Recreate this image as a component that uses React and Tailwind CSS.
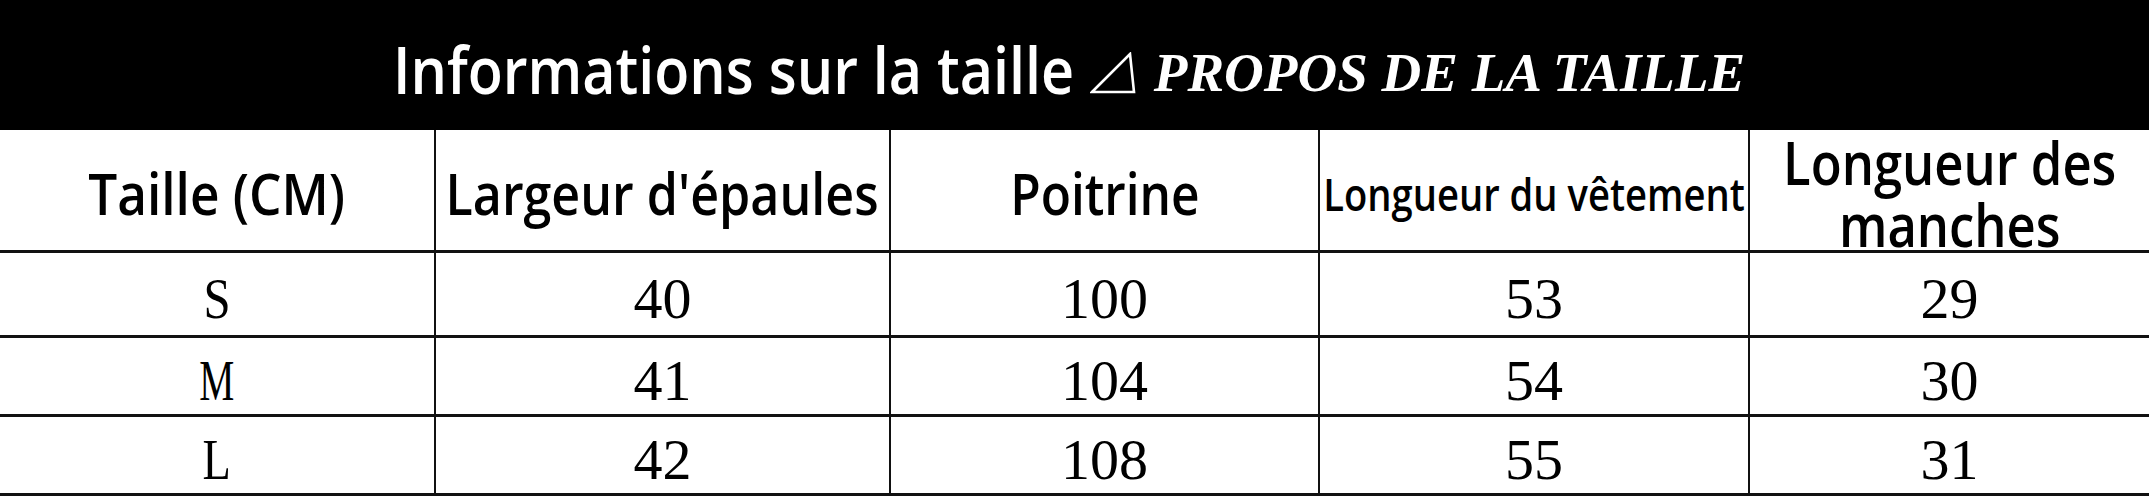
import React from 'react';

const columns = [
  { label: 'Taille (CM)', width: 'w-[436px]', text: 'text-[57px] scale-x-[0.9]' },
  { label: "Largeur d'épaules", width: 'w-[455px]', text: 'text-[57px] scale-x-[0.88]' },
  { label: 'Poitrine', width: 'w-[429px]', text: 'text-[57px] scale-x-[0.87]' },
  { label: 'Longueur du vêtement', width: 'w-[430px]', text: 'text-[46px] scale-x-[0.83]' },
  { label: 'Longueur des manches', width: 'w-[399px]', text: 'text-[59px] scale-x-[0.86]' },
];

const rows = [
  { size: 'S', sizeScale: 'scale-x-[0.84]', values: ['40', '100', '53', '29'], height: 'h-[85px]' },
  { size: 'M', sizeScale: 'scale-x-[0.68]', values: ['41', '104', '54', '30'], height: 'h-[79px]' },
  { size: 'L', sizeScale: 'scale-x-[0.8]', values: ['42', '108', '55', '31'], height: 'h-[79px]' },
];

function Triangle() {
  return (
    <svg width="46" height="42" viewBox="0 0 46 42" className="ml-[26px] mr-[18px] mt-[10px] shrink-0">
      <polygon points="2,40 40,2 44,40" fill="none" stroke="white" strokeWidth="2.6" strokeLinejoin="miter" />
    </svg>
  );
}

export default function App() {
  return (
    <div className="w-[2149px] h-[496px] bg-white overflow-hidden">
      <div className="h-[130px] bg-black flex items-center justify-center pt-[6px]">
        <span className="w-[660px] flex justify-center shrink-0">
          <span className="inline-block shrink-0 scale-x-[0.87] text-white text-[66px] font-semibold leading-none whitespace-nowrap font-['Open_Sans',sans-serif]">
            Informations sur la taille
          </span>
        </span>
        <Triangle />
        <span className="mt-[8px] shrink-0 text-white text-[55px] font-bold italic leading-none whitespace-nowrap font-['Liberation_Serif',serif]">
          PROPOS DE LA TAILLE
        </span>
      </div>

      <div className="flex h-[123px] border-b-[3px] border-[#111]">
        {columns.map((col, i) => (
          <div
            key={col.label}
            className={`${col.width} flex items-center justify-center text-center ${i < columns.length - 1 ? 'border-r-2 border-[#111]' : ''}`}
          >
            <span className={`inline-block shrink-0 ${col.text} font-semibold text-black font-['Open_Sans',sans-serif] ${i === 4 ? 'leading-[62px] pt-[6px] whitespace-nowrap' : 'leading-none whitespace-nowrap pt-[6px]'}`}>
              {i === 4 ? (
                <>
                  Longueur des
                  <br />
                  manches
                </>
              ) : (
                col.label
              )}
            </span>
          </div>
        ))}
      </div>

      {rows.map((row) => (
        <div key={row.size} className={`flex ${row.height} border-b-[3px] border-[#111]`}>
          {[row.size, ...row.values].map((v, i) => (
            <div
              key={i}
              className={`${columns[i].width} flex items-center justify-center pt-[10px] ${i < 4 ? 'border-r-2 border-[#111]' : ''}`}
            >
              <span className={`inline-block text-[58px] leading-none text-black font-['Liberation_Serif',serif] ${i === 0 ? row.sizeScale : ''}`}>
                {v}
              </span>
            </div>
          ))}
        </div>
      ))}
    </div>
  );
}
